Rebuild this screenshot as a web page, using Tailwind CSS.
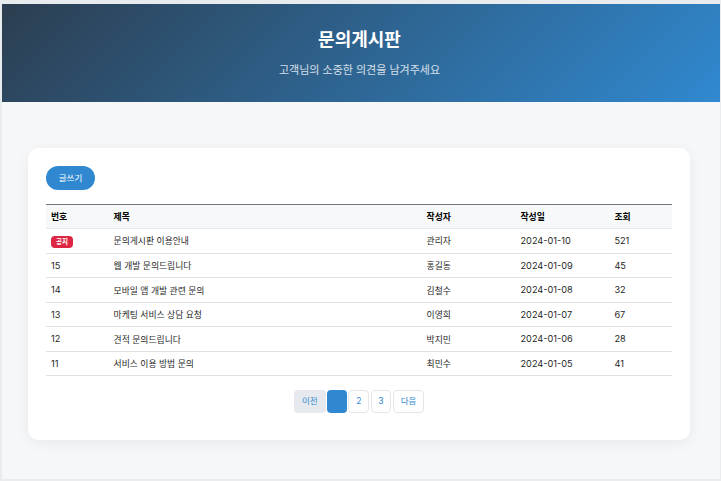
<!DOCTYPE html>
<html lang="ko">

<head>
  <meta charset="UTF-8" />
  <meta name="viewport" content="width=device-width, initial-scale=1.0" />
  <script src="https://cdn.jsdelivr.net/npm/@tailwindcss/browser@4"></script>
  <title>문의게시판</title>
</head>

<body class="bg-[#e9ecef] font-['Inter','Noto_Sans_CJK_KR',sans-serif]">
  <div class="w-[721px] h-[481px] overflow-hidden pt-[4px] pl-[1.5px] pr-[1.5px] pb-[2px]">
    <div class="h-[475px] bg-[#f5f7f9]">
      <header class="h-[98px] bg-[linear-gradient(135deg,#2c3e50,#3089d0)] text-center text-white pt-[22px] pr-[2px]">
        <h1 class="text-[18px] leading-[27px] font-bold">문의게시판</h1>
        <p class="mt-[9px] text-[11px] leading-[16px] text-white/80">고객님의 소중한 의견을 남겨주세요</p>
      </header>

      <main class="mt-[46px] ml-[26.5px] w-[662px] h-[292px] bg-white rounded-[10px] shadow-[0_3px_14px_rgba(0,0,0,0.06)] px-[18px] pt-[18px]">
        <button class="block w-[49px] h-[24px] rounded-full bg-[#3089d0] text-white text-[8.5px]">글쓰기</button>

        <table class="mt-[14px] w-[626px] table-fixed border-collapse text-[8.8px] text-[#1f1f1f]">
          <thead>
            <tr class="h-[24px] bg-[#f7f8fa] border-t-[1.5px] border-b border-t-[#71767f] border-b-[#e4e7eb] text-left text-black">
              <th class="w-[10%] px-[5px] font-bold">번호</th>
              <th class="w-[50%] px-[5px] font-bold">제목</th>
              <th class="w-[15%] px-[5px] font-bold">작성자</th>
              <th class="w-[15%] px-[5px] font-bold">작성일</th>
              <th class="w-[10%] px-[5px] font-bold">조회</th>
            </tr>
          </thead>
          <tbody>
            <tr class="h-[24.5px] border-b border-[#dee2e6]">
              <td class="px-[5px]"><span class="inline-block w-[22px] h-[12px] leading-[12px] rounded-[4px] bg-[#dc2643] text-white text-[6.5px] font-bold text-center align-middle">공지</span></td>
              <td class="px-[5px]">문의게시판 이용안내</td>
              <td class="px-[5px]">관리자</td>
              <td class="px-[5px] text-[9.2px]">2024-01-10</td>
              <td class="px-[5px] text-[9.2px]">521</td>
            </tr>
            <tr class="h-[24.5px] border-b border-[#dee2e6]">
              <td class="px-[5px] pt-[1px] text-[9.2px]">15</td>
              <td class="px-[5px] pt-[1px]">웹 개발 문의드립니다</td>
              <td class="px-[5px] pt-[1px]">홍길동</td>
              <td class="px-[5px] pt-[1px] text-[9.2px]">2024-01-09</td>
              <td class="px-[5px] pt-[1px] text-[9.2px]">45</td>
            </tr>
            <tr class="h-[24.5px] border-b border-[#dee2e6]">
              <td class="px-[5px] pt-[1px] text-[9.2px]">14</td>
              <td class="px-[5px] pt-[1px]">모바일 앱 개발 관련 문의</td>
              <td class="px-[5px] pt-[1px]">김철수</td>
              <td class="px-[5px] pt-[1px] text-[9.2px]">2024-01-08</td>
              <td class="px-[5px] pt-[1px] text-[9.2px]">32</td>
            </tr>
            <tr class="h-[24.5px] border-b border-[#dee2e6]">
              <td class="px-[5px] pt-[1px] text-[9.2px]">13</td>
              <td class="px-[5px] pt-[1px]">마케팅 서비스 상담 요청</td>
              <td class="px-[5px] pt-[1px]">이영희</td>
              <td class="px-[5px] pt-[1px] text-[9.2px]">2024-01-07</td>
              <td class="px-[5px] pt-[1px] text-[9.2px]">67</td>
            </tr>
            <tr class="h-[24.5px] border-b border-[#dee2e6]">
              <td class="px-[5px] pt-[1px] text-[9.2px]">12</td>
              <td class="px-[5px] pt-[1px]">견적 문의드립니다</td>
              <td class="px-[5px] pt-[1px]">박지민</td>
              <td class="px-[5px] pt-[1px] text-[9.2px]">2024-01-06</td>
              <td class="px-[5px] pt-[1px] text-[9.2px]">28</td>
            </tr>
            <tr class="h-[24.5px] border-b border-[#dee2e6]">
              <td class="px-[5px] pt-[1px] text-[9.2px]">11</td>
              <td class="px-[5px] pt-[1px]">서비스 이용 방법 문의</td>
              <td class="px-[5px] pt-[1px]">최민수</td>
              <td class="px-[5px] pt-[1px] text-[9.2px]">2024-01-05</td>
              <td class="px-[5px] pt-[1px] text-[9.2px]">41</td>
            </tr>
          </tbody>
        </table>

        <nav class="mt-[14px] flex justify-center gap-[1.5px] text-[8.5px] text-[#3089d0]">
          <a class="w-[32px] h-[23px] leading-[23px] text-center rounded-[4px] bg-[#e6e9ed]">이전</a>
          <a class="w-[19.5px] h-[23px] rounded-[4px] bg-[#3089d0]"></a>
          <a class="w-[21px] h-[23px] leading-[21px] text-center rounded-[4px] bg-white border border-[#e2e6ea]">2</a>
          <a class="w-[20.5px] h-[23px] leading-[21px] text-center rounded-[4px] bg-white border border-[#e2e6ea]">3</a>
          <a class="w-[31.5px] h-[23px] leading-[21px] text-center rounded-[4px] bg-white border border-[#e2e6ea]">다음</a>
        </nav>
      </main>
    </div>
  </div>
</body>

</html>
